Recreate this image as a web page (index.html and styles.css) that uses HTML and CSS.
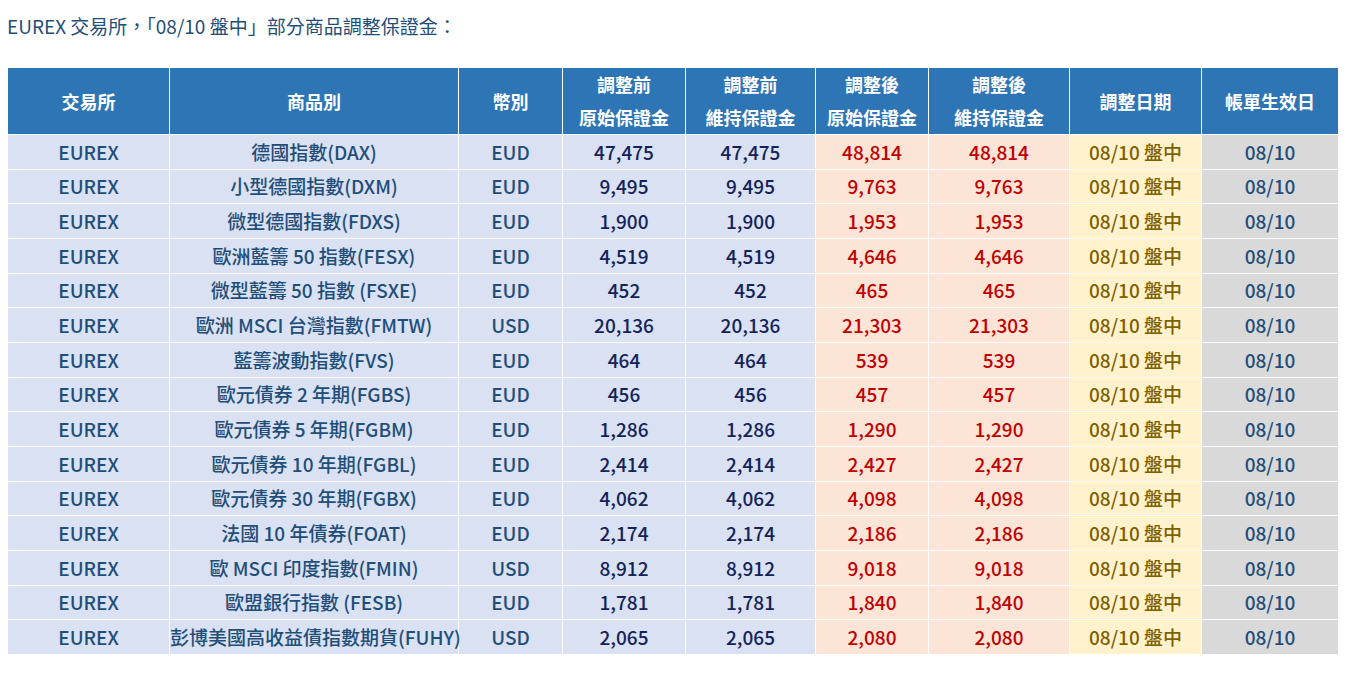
FILE: index.html
```html
<!DOCTYPE html>
<html lang="zh-TW">
<head>
<meta charset="utf-8">
<title>EUREX 保證金調整</title>
<link rel="stylesheet" href="styles.css">
</head>
<body>
<p class="title">EUREX 交易所，「08/10 盤中」部分商品調整保證金：</p>
<table class="margin">
  <colgroup>
    <col style="width:162px"><col style="width:289px"><col style="width:104px"><col style="width:123px"><col style="width:130px"><col style="width:113px"><col style="width:141px"><col style="width:132px"><col style="width:137px">
  </colgroup>
  <thead>
    <tr>
      <th>交易所</th><th>商品別</th><th>幣別</th>
      <th>調整前<br>原始保證金</th><th>調整前<br>維持保證金</th>
      <th>調整後<br>原始保證金</th><th>調整後<br>維持保證金</th>
      <th>調整日期</th><th>帳單生效日</th>
    </tr>
  </thead>
  <tbody>
    <tr><td>EUREX</td><td>德國指數(DAX)</td><td>EUD</td><td class="num">47,475</td><td class="num">47,475</td><td class="new">48,814</td><td class="new">48,814</td><td class="date">08/10 盤中</td><td class="eff">08/10</td></tr>
    <tr><td>EUREX</td><td>小型德國指數(DXM)</td><td>EUD</td><td class="num">9,495</td><td class="num">9,495</td><td class="new">9,763</td><td class="new">9,763</td><td class="date">08/10 盤中</td><td class="eff">08/10</td></tr>
    <tr><td>EUREX</td><td>微型德國指數(FDXS)</td><td>EUD</td><td class="num">1,900</td><td class="num">1,900</td><td class="new">1,953</td><td class="new">1,953</td><td class="date">08/10 盤中</td><td class="eff">08/10</td></tr>
    <tr><td>EUREX</td><td>歐洲藍籌 50 指數(FESX)</td><td>EUD</td><td class="num">4,519</td><td class="num">4,519</td><td class="new">4,646</td><td class="new">4,646</td><td class="date">08/10 盤中</td><td class="eff">08/10</td></tr>
    <tr><td>EUREX</td><td>微型藍籌 50 指數 (FSXE)</td><td>EUD</td><td class="num">452</td><td class="num">452</td><td class="new">465</td><td class="new">465</td><td class="date">08/10 盤中</td><td class="eff">08/10</td></tr>
    <tr><td>EUREX</td><td>歐洲 MSCI 台灣指數(FMTW)</td><td>USD</td><td class="num">20,136</td><td class="num">20,136</td><td class="new">21,303</td><td class="new">21,303</td><td class="date">08/10 盤中</td><td class="eff">08/10</td></tr>
    <tr><td>EUREX</td><td>藍籌波動指數(FVS)</td><td>EUD</td><td class="num">464</td><td class="num">464</td><td class="new">539</td><td class="new">539</td><td class="date">08/10 盤中</td><td class="eff">08/10</td></tr>
    <tr><td>EUREX</td><td>歐元債券 2 年期(FGBS)</td><td>EUD</td><td class="num">456</td><td class="num">456</td><td class="new">457</td><td class="new">457</td><td class="date">08/10 盤中</td><td class="eff">08/10</td></tr>
    <tr><td>EUREX</td><td>歐元債券 5 年期(FGBM)</td><td>EUD</td><td class="num">1,286</td><td class="num">1,286</td><td class="new">1,290</td><td class="new">1,290</td><td class="date">08/10 盤中</td><td class="eff">08/10</td></tr>
    <tr><td>EUREX</td><td>歐元債券 10 年期(FGBL)</td><td>EUD</td><td class="num">2,414</td><td class="num">2,414</td><td class="new">2,427</td><td class="new">2,427</td><td class="date">08/10 盤中</td><td class="eff">08/10</td></tr>
    <tr><td>EUREX</td><td>歐元債券 30 年期(FGBX)</td><td>EUD</td><td class="num">4,062</td><td class="num">4,062</td><td class="new">4,098</td><td class="new">4,098</td><td class="date">08/10 盤中</td><td class="eff">08/10</td></tr>
    <tr><td>EUREX</td><td>法國 10 年債券(FOAT)</td><td>EUD</td><td class="num">2,174</td><td class="num">2,174</td><td class="new">2,186</td><td class="new">2,186</td><td class="date">08/10 盤中</td><td class="eff">08/10</td></tr>
    <tr><td>EUREX</td><td>歐 MSCI 印度指數(FMIN)</td><td>USD</td><td class="num">8,912</td><td class="num">8,912</td><td class="new">9,018</td><td class="new">9,018</td><td class="date">08/10 盤中</td><td class="eff">08/10</td></tr>
    <tr><td>EUREX</td><td>歐盟銀行指數 (FESB)</td><td>EUD</td><td class="num">1,781</td><td class="num">1,781</td><td class="new">1,840</td><td class="new">1,840</td><td class="date">08/10 盤中</td><td class="eff">08/10</td></tr>
    <tr><td>EUREX</td><td>彭博美國高收益債指數期貨(FUHY)</td><td>USD</td><td class="num">2,065</td><td class="num">2,065</td><td class="new">2,080</td><td class="new">2,080</td><td class="date">08/10 盤中</td><td class="eff">08/10</td></tr>
  </tbody>
</table>
</body>
</html>
```

FILE: styles.css
```css
html, body {
  margin: 0;
  padding: 0;
  background: #ffffff;
}
body {
  padding: 0 7px;
  font-family: "Noto Sans CJK TC", "Noto Sans", sans-serif;
  color: #1f4e79;
}
.title {
  margin: 0;
  padding-top: 13px;
  height: 68px;
  box-sizing: border-box;
  font-size: 19px;
  line-height: 26px;
  font-weight: 400;
  color: #1f4e79;
}
.margin {
  border-collapse: collapse;
  table-layout: fixed;
  width: 1331px;
}
.margin th,
.margin td {
  border: 1px solid #ffffff;
  padding: 0;
  text-align: center;
  vertical-align: middle;
  white-space: nowrap;
}
.margin th {
  background: #2e75b6;
  color: #ffffff;
  font-weight: bold;
  font-size: 18px;
  line-height: 33px;
  height: 66px;
}
.margin tbody tr {
  height: 34.67px;
}
.margin td {
  background: #d9e1f2;
  font-size: 19px;
  line-height: 24px;
  font-weight: 500;
  color: #1f4e79;
}
.margin td.num {
  color: #13235a;
}
.margin td.new {
  background: #fce4d6;
  color: #c00000;
}
.margin td.date {
  background: #fff2cc;
  color: #7f6000;
}
.margin td.eff {
  background: #d9d9d9;
  color: #1f4e79;
}
.margin thead tr th {
  border-top: 0;
}
```
